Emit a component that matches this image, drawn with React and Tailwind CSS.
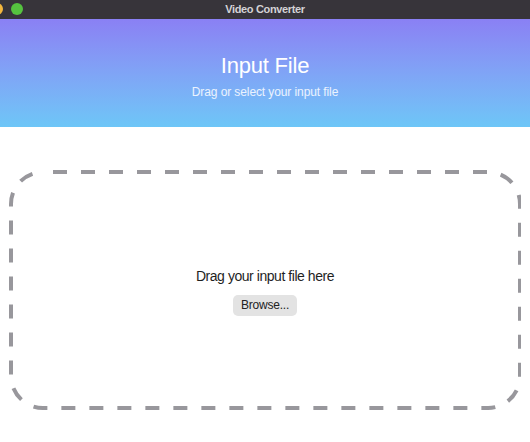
export default function App() {
  return (
    <div className="w-[530px] h-[442px] flex flex-col bg-white overflow-hidden font-['Helvetica','Liberation_Sans',sans-serif]">
      {/* title bar */}
      <div className="relative h-[19px] bg-[#37343a] flex items-center justify-center">
        <div className="absolute left-[-9px] top-[3px] flex gap-[8px]">
          <span className="w-[12px] h-[12px] rounded-full bg-[#f4b73d]" />
          <span className="w-[12px] h-[12px] rounded-full bg-[#55c23f]" />
        </div>
        <span className="text-[11px] font-bold text-[#d4d2d6] tracking-[-0.35px]">Video Converter</span>
      </div>

      {/* header */}
      <div className="h-[108px] bg-gradient-to-b from-[#8a80f4] to-[#6dc6f7] flex flex-col items-center pt-[34px]">
        <h1 className="text-[22px] font-light text-white leading-[25px] tracking-[-0.2px]">Input File</h1>
        <p className="mt-[7px] text-[12px] text-white/85 leading-[15px] tracking-[-0.1px]">Drag or select your input file</p>
      </div>

      {/* drop zone */}
      <div className="flex-1 px-[9px] pt-[43px] pb-[30px]">
        <div className="relative h-full flex flex-col items-center justify-center">
          <svg className="absolute inset-0 w-full h-full" preserveAspectRatio="none">
            <rect
              x="2"
              y="2"
              width="509"
              height="236"
              rx="32"
              ry="32"
              fill="none"
              stroke="#98979c"
              strokeWidth="4"
              strokeDasharray="14 14"
              strokeDashoffset="-10"
            />
          </svg>
          <p className="relative text-[14px] text-[#1f1f1f] leading-[18px] tracking-[-0.45px]">Drag your input file here</p>
          <button className="relative mt-[10px] w-[64px] h-[21px] rounded-[5px] bg-[#e3e3e3] text-[12px] text-[#222] leading-[21px] tracking-[-0.2px]">
            Browse...
          </button>
        </div>
      </div>
    </div>
  );
}
